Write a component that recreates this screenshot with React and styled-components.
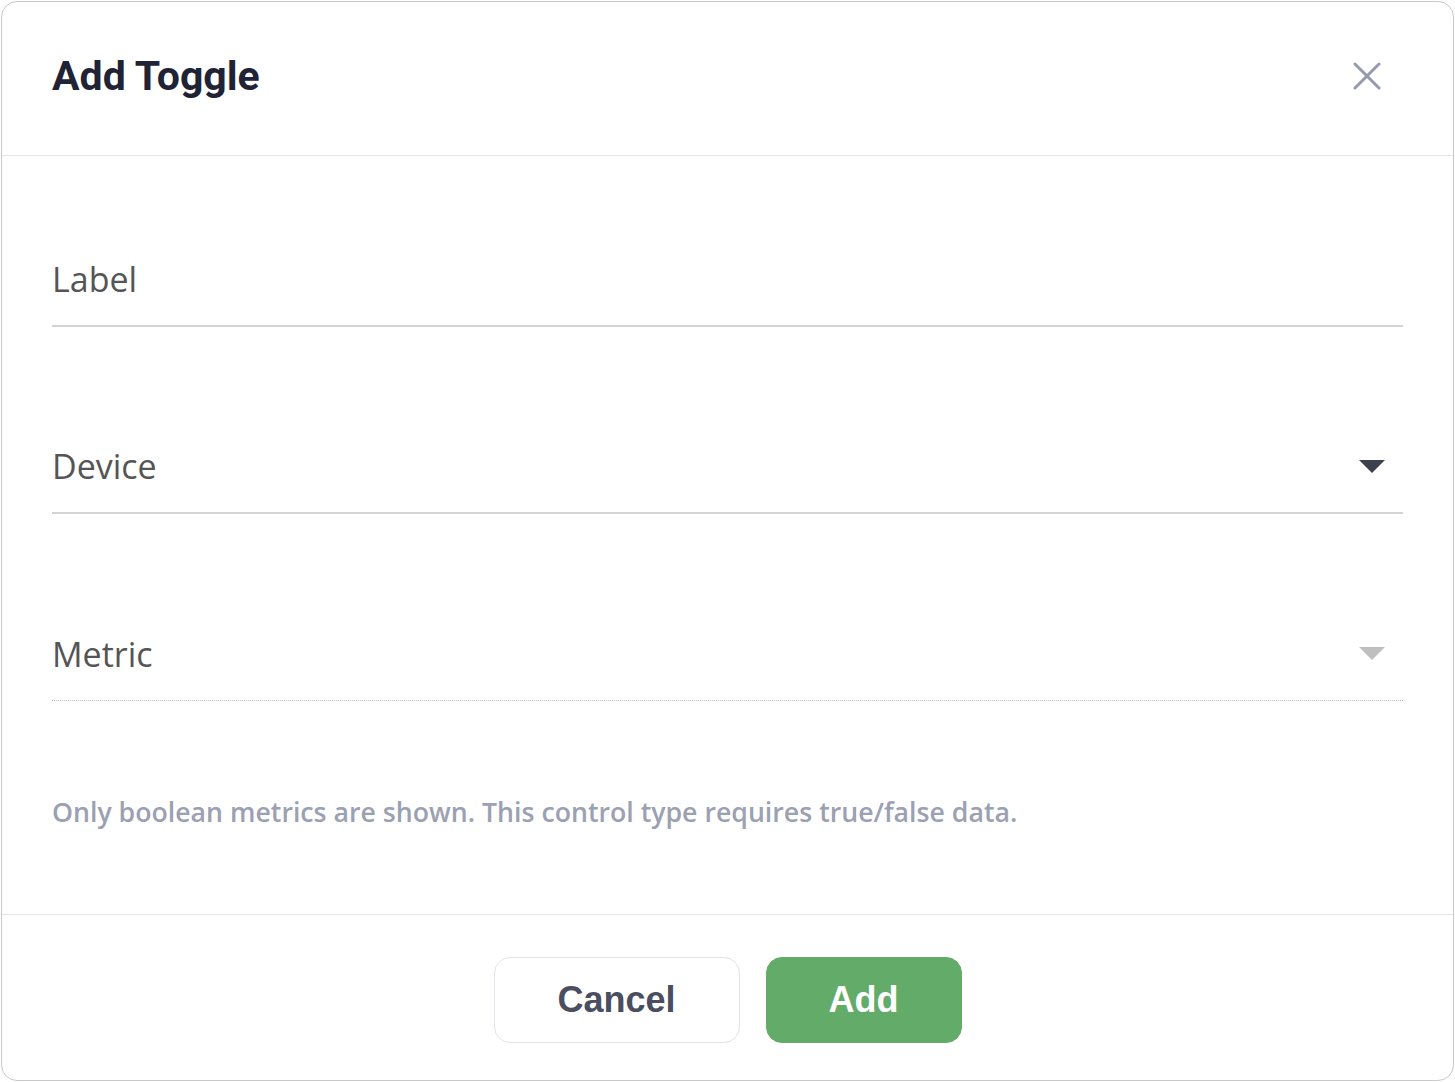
import React from 'react';
import styled, { createGlobalStyle } from 'styled-components';

const GlobalStyle = createGlobalStyle`
  html, body {
    margin: 0;
    padding: 0;
    background: #ffffff;
  }
  * {
    box-sizing: border-box;
  }
`;

const Page = styled.div`
  width: 1455px;
  height: 1082px;
  padding: 1px;
`;

const Dialog = styled.div`
  width: 100%;
  height: 100%;
  border: 1px solid #c9c9cc;
  border-radius: 16px;
  background: #ffffff;
  display: flex;
  flex-direction: column;
  overflow: hidden;
`;

const Header = styled.div`
  height: 154px;
  flex: none;
  display: flex;
  align-items: center;
  justify-content: space-between;
  padding: 0 72px 6px 50px;
  border-bottom: 1px solid #e4e4e6;
`;

const Title = styled.h2`
  margin: 0;
  font-family: Roboto, "Liberation Sans", sans-serif;
  font-weight: 700;
  font-size: 41px;
  color: #1f2335;
`;

const CloseButton = styled.button`
  border: none;
  background: none;
  padding: 0;
  width: 28px;
  height: 28px;
  display: flex;
  align-items: center;
  justify-content: center;
  cursor: pointer;
`;

const Body = styled.div`
  flex: 1;
  display: flex;
  flex-direction: column;
  padding: 100px 50px 0 50px;
  border-bottom: 1px solid #e4e4e6;
`;

const Field = styled.div`
  display: flex;
  align-items: center;
  justify-content: space-between;
  height: 71px;
  padding-bottom: 23px;
  margin-bottom: 116px;
  border-bottom: ${p => (p.$disabled ? '1px dotted #bdbdbd' : '2px solid #d3d3d3')};
`;

const Placeholder = styled.span`
  font-family: "Open Sans", "Noto Sans", sans-serif;
  font-size: 34px;
  line-height: 46px;
  color: #555555;
`;

const Caret = styled.span`
  width: 0;
  height: 0;
  margin-right: 18px;
  border-left: 13px solid transparent;
  border-right: 13px solid transparent;
  border-top: 13px solid ${p => (p.$disabled ? '#bfbfbf' : '#3d414d')};
`;

const Hint = styled.p`
  margin: -23px 0 0 0;
  font-family: "Open Sans", "Noto Sans", sans-serif;
  font-weight: 600;
  font-size: 26.7px;
  line-height: 36px;
  color: #9ba1b2;
`;

const Footer = styled.div`
  height: 165px;
  flex: none;
  display: flex;
  align-items: center;
  justify-content: center;
  gap: 26px;
  padding-top: 5px;
`;

const Button = styled.button`
  height: 86px;
  width: ${p => p.$width}px;
  border-radius: 16px;
  font-family: "Liberation Sans", Arial, sans-serif;
  font-weight: 700;
  font-size: 36px;
  cursor: pointer;
  border: 1px solid ${p => (p.$primary ? '#63ab69' : '#e2e3e8')};
  background: ${p => (p.$primary ? '#63ab69' : '#ffffff')};
  color: ${p => (p.$primary ? '#ffffff' : '#4a4e5f')};
`;

function CloseIcon() {
  return (
    <svg width="28" height="28" viewBox="0 0 28 28" fill="none">
      <path d="M2 2L26 26M26 2L2 26" stroke="#959aad" strokeWidth="3" strokeLinecap="round" />
    </svg>
  );
}

export default function App() {
  return (
    <Page>
      <GlobalStyle />
      <Dialog>
        <Header>
          <Title>Add Toggle</Title>
          <CloseButton aria-label="Close">
            <CloseIcon />
          </CloseButton>
        </Header>
        <Body>
          <Field>
            <Placeholder>Label</Placeholder>
          </Field>
          <Field>
            <Placeholder>Device</Placeholder>
            <Caret />
          </Field>
          <Field $disabled>
            <Placeholder>Metric</Placeholder>
            <Caret $disabled />
          </Field>
          <Hint>Only boolean metrics are shown. This control type requires true/false data.</Hint>
        </Body>
        <Footer>
          <Button $width={246}>Cancel</Button>
          <Button $width={196} $primary>Add</Button>
        </Footer>
      </Dialog>
    </Page>
  );
}
